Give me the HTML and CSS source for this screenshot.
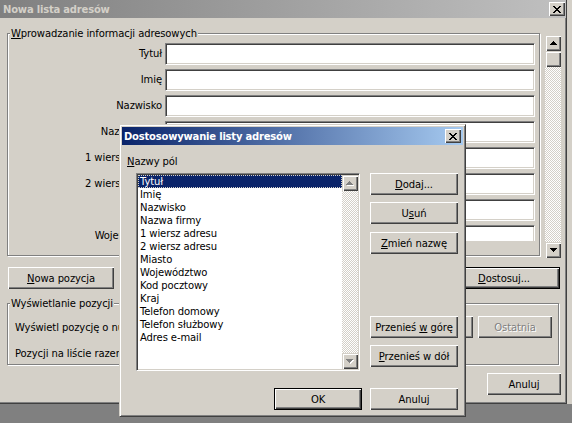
FILE: index.html
```html
<!DOCTYPE html>
<html lang="pl">
<head>
<meta charset="utf-8">
<title>Nowa lista adresów</title>
<link rel="stylesheet" href="styles.css">
</head>
<body>
<div class="desk">
  <div class="win outer">
    <div class="title inactive">
      <span class="title-text">Nowa lista adresów</span>
      <span class="capbtn"><svg width="8" height="7" viewBox="0 0 8 7"><path d="M0 0h2v1H0zM6 0h2v1H6zM1 1h2v1H1zM5 1h2v1H5zM2 2h4v1H2zM3 3h2v1H3zM2 4h4v1H2zM1 5h2v1H1zM5 5h2v1H5zM0 6h2v1H0zM6 6h2v1H6z" fill="#000"/></svg></span>
    </div>

    <div class="top-row">
      <div class="group g1">
        <span class="legend"><u>W</u>prowadzanie informacji adresowych</span>
        <div class="fields">
          <label>Tytuł</label><span class="edit"></span>
          <label>Imię</label><span class="edit"></span>
          <label>Nazwisko</label><span class="edit"></span>
          <label>Nazwa firmy</label><span class="edit"></span>
          <label>1 wiersz adresu</label><span class="edit"></span>
          <label>2 wiersz adresu</label><span class="edit"></span>
          <label>Miasto</label><span class="edit"></span>
          <label>Województwo</label><span class="edit"></span>
        </div>
      </div>
      <div class="vscroll">
        <span class="sbtn"><svg width="7" height="4" viewBox="0 0 7 4"><path d="M3 0h1v1H3zM2 1h3v1H2zM1 2h5v1H1zM0 3h7v1H0z" fill="#000"/></svg></span>
        <span class="sbtn thumb"></span>
        <span class="strack"></span>
        <span class="sbtn"><svg width="7" height="4" viewBox="0 0 7 4"><path d="M0 0h7v1H0zM1 1h5v1H1zM2 2h3v1H2zM3 3h1v1H3z" fill="#000"/></svg></span>
      </div>
    </div>

    <div class="btn-row">
      <span class="btn w-new"><span><u>N</u>owa pozycja</span></span>
      <span class="btn def w-cust"><span><u>D</u>ostosuj...</span></span>
    </div>

    <div class="group g2">
      <span class="legend">Wyświetlanie pozycji</span>
      <div class="nav-row">
        <span class="txt">Wyświetl pozycję o numerze</span>
        <span class="btn w-nav"><span>Następna</span></span>
        <span class="btn w-nav disabled"><span>Ostatnia</span></span>
      </div>
      <div class="count-row">Pozycji na liście razem: 1</div>
    </div>

    <div class="foot">
      <span class="btn w-nav"><span>OK</span></span>
      <span class="btn w-nav"><span>Anuluj</span></span>
    </div>
  </div>

  <div class="win inner">
    <div class="title active">
      <span class="title-text">Dostosowywanie listy adresów</span>
      <span class="capbtn"><svg width="8" height="7" viewBox="0 0 8 7"><path d="M0 0h2v1H0zM6 0h2v1H6zM1 1h2v1H1zM5 1h2v1H5zM2 2h4v1H2zM3 3h2v1H3zM2 4h4v1H2zM1 5h2v1H1zM5 5h2v1H5zM0 6h2v1H0zM6 6h2v1H6z" fill="#000"/></svg></span>
    </div>
    <div class="names-label"><u>N</u>azwy pól</div>
    <div class="list-row">
      <div class="listbox">
        <ul class="items">
          <li class="sel">Tytuł</li>
          <li>Imię</li>
          <li>Nazwisko</li>
          <li>Nazwa firmy</li>
          <li>1 wiersz adresu</li>
          <li>2 wiersz adresu</li>
          <li>Miasto</li>
          <li>Województwo</li>
          <li>Kod pocztowy</li>
          <li>Kraj</li>
          <li>Telefon domowy</li>
          <li>Telefon służbowy</li>
          <li>Adres e-mail</li>
        </ul>
        <div class="lscroll">
          <span class="sbtn"><svg width="8" height="5" viewBox="0 0 8 5"><path d="M4 1h1v1H4zM3 2h3v1H3zM2 3h5v1H2zM1 4h7v1H1z" fill="#fff"/><path d="M3 0h1v1H3zM2 1h3v1H2zM1 2h5v1H1zM0 3h7v1H0z" fill="#808080"/></svg></span>
          <span class="strack"></span>
          <span class="sbtn"><svg width="8" height="5" viewBox="0 0 8 5"><path d="M1 1h7v1H1zM2 2h5v1H2zM3 3h3v1H3zM4 4h1v1H4z" fill="#fff"/><path d="M0 0h7v1H0zM1 1h5v1H1zM2 2h3v1H2zM3 3h1v1H3z" fill="#808080"/></svg></span>
        </div>
      </div>
      <div class="side-btns">
        <span class="btn w-side"><span><u>D</u>odaj...</span></span>
        <span class="btn w-side b-del"><span>U<u>s</u>uń</span></span>
        <span class="btn w-side b-ren"><span><u>Z</u>mień nazwę</span></span>
        <span class="btn w-side b-up"><span>Przenieś <u>w</u> górę</span></span>
        <span class="btn w-side b-down"><span><u>P</u>rzenieś w dół</span></span>
      </div>
    </div>
    <div class="dlg-foot">
      <span class="btn def w-side"><span>OK</span></span>
      <span class="btn w-side"><span>Anuluj</span></span>
    </div>
  </div>
</div>
</body>
</html>
```

FILE: styles.css
```css
* { box-sizing: border-box; }
html, body { margin: 0; padding: 0; }
body {
  width: 572px;
  height: 423px;
  overflow: hidden;
  background: linear-gradient(#d4d0c8 0 404px, #808080 404px);
  font: 10px/13px "DejaVu Sans", "Liberation Sans", sans-serif;
  letter-spacing: -0.1px;
  color: #000;
}
u { text-decoration: underline; text-underline-offset: 1px; }

.desk { position: relative; width: 572px; height: 423px; }
.win { position: absolute; background: #d4d0c8; }

/* outer window */
.outer {
  left: 0; top: 0;
  width: 567px; height: 404px;
  border-right: 1px solid #404040;
  border-bottom: 1px solid #404040;
  box-shadow: inset -1px -1px 0 #808080;
}

.title { display: flex; align-items: center; height: 18px; }
.outer .title { width: 566px; background: linear-gradient(to right, #808080, #c0c0c0); color: #d4d0c8; }
.inner .title { background: linear-gradient(to right, #0a246a, #a6caf0); color: #fff; }
.title-text { flex: 1; padding-left: 3px; font-weight: bold; white-space: nowrap; letter-spacing: -0.2px; }
.inner .title-text { padding-left: 2px; }
.capbtn {
  width: 16px; height: 14px; margin-right: 2px;
  display: flex; align-items: center; justify-content: center;
  background: #d4d0c8;
  box-shadow: inset 1px 1px 0 #fff, inset -1px -1px 0 #404040, inset -2px -2px 0 #808080;
}
.outer .capbtn { margin-right: 1px; }

/* etched group boxes */
.group {
  border: 1px solid #808080;
  box-shadow: 1px 1px 0 #fff, inset 1px 1px 0 #fff;
}
.legend {
  display: block; width: fit-content;
  margin: -7px 0 0 2px; padding: 0 1px;
  background: #d4d0c8; line-height: 13px; white-space: nowrap;
}

.top-row { display: flex; align-items: flex-start; margin-top: 15px; }
.g1 { margin-left: 7px; width: 533px; height: 223px; }
.fields {
  margin-top: 3px; height: 198px; overflow: hidden;
  display: grid;
  grid-template-columns: 154px 370px;
  grid-auto-rows: 22px;
  column-gap: 3px; row-gap: 4px;
}
.fields label { text-align: right; line-height: 22px; white-space: nowrap; }
.edit {
  background: #fff;
  border: 1px solid; border-color: #808080 #fff #fff #808080;
  box-shadow: inset 1px 1px 0 #404040, inset -1px -1px 0 #d4d0c8;
}

/* scrollbars */
.vscroll, .lscroll {
  display: flex; flex-direction: column;
  width: 16px;
  background: conic-gradient(#fff 25%, #d4d0c8 0 50%, #fff 0 75%, #d4d0c8 0) 0 0 / 2px 2px;
}
.vscroll { margin: 2px 0 0 5px; height: 223px; }
.lscroll { flex: none; height: 100%; }
.sbtn {
  flex: none; width: 16px; height: 16px;
  display: flex; align-items: center; justify-content: center;
  background: #d4d0c8;
  box-shadow: inset 1px 1px 0 #d4d0c8, inset 2px 2px 0 #fff, inset -1px -1px 0 #404040, inset -2px -2px 0 #808080;
}
.strack { flex: 1; }

/* buttons */
.btn {
  display: flex; align-items: center; justify-content: center;
  height: 22px; flex: none;
  background: #d4d0c8; white-space: nowrap;
  box-shadow: inset 1px 1px 0 #fff, inset -1px -1px 0 #404040, inset -2px -2px 0 #808080;
}
.btn.def { border: 1px solid #000; }
.btn.disabled { color: #808080; text-shadow: 1px 1px 0 #fff; }
.w-new { width: 106px; }
.w-cust { width: 112px; }
.w-nav { width: 74px; }
.w-side { width: 88px; }

.btn-row { display: flex; justify-content: space-between; margin: 9px 0 0 8px; width: 552px; }

.g2 { margin: 14px 0 0 7px; width: 552px; height: 62px; }
.nav-row { display: flex; align-items: center; gap: 5px; height: 22px; margin-top: 6px; padding: 0 6px 0 7px; }
.nav-row .txt { flex: 1; white-space: nowrap; }
.count-row { margin-top: 9px; padding-left: 7px; white-space: nowrap; }

.foot { display: flex; justify-content: flex-end; gap: 40px; margin-top: 8px; width: 561px; }

/* inner dialog */
.inner {
  left: 119px; top: 124px;
  width: 347px; height: 293px;
  border: 1px solid; border-color: #d4d0c8 #404040 #404040 #d4d0c8;
  box-shadow: inset 1px 1px 0 #fff, inset -1px -1px 0 #808080;
  padding: 2px;
}
.names-label { margin: 10px 0 0 5px; }
.list-row { display: flex; align-items: flex-start; margin-top: 5px; padding-left: 14px; }
.listbox {
  display: flex; width: 224px; height: 198px;
  background: #fff;
  border: 1px solid; border-color: #808080 #fff #fff #808080;
  box-shadow: inset 1px 1px 0 #404040, inset -1px -1px 0 #d4d0c8;
  padding: 1px;
}
.items { flex: 1; list-style: none; margin: 0; padding: 0; }
.items li { height: 13px; line-height: 13px; padding-left: 2px; white-space: nowrap; }
.items li.sel { background: #0a246a; color: #fff; outline: 1px dotted #d4d0c8; outline-offset: -1px; }

.side-btns { display: flex; flex-direction: column; margin-left: 10px; }
.b-del { margin-top: 7px; }
.b-ren { margin-top: 8px; }
.b-up { margin-top: 62px; }
.b-down { margin-top: 7px; }

.dlg-foot { display: flex; justify-content: flex-end; gap: 8px; margin-top: 17px; padding-right: 5px; }
```
